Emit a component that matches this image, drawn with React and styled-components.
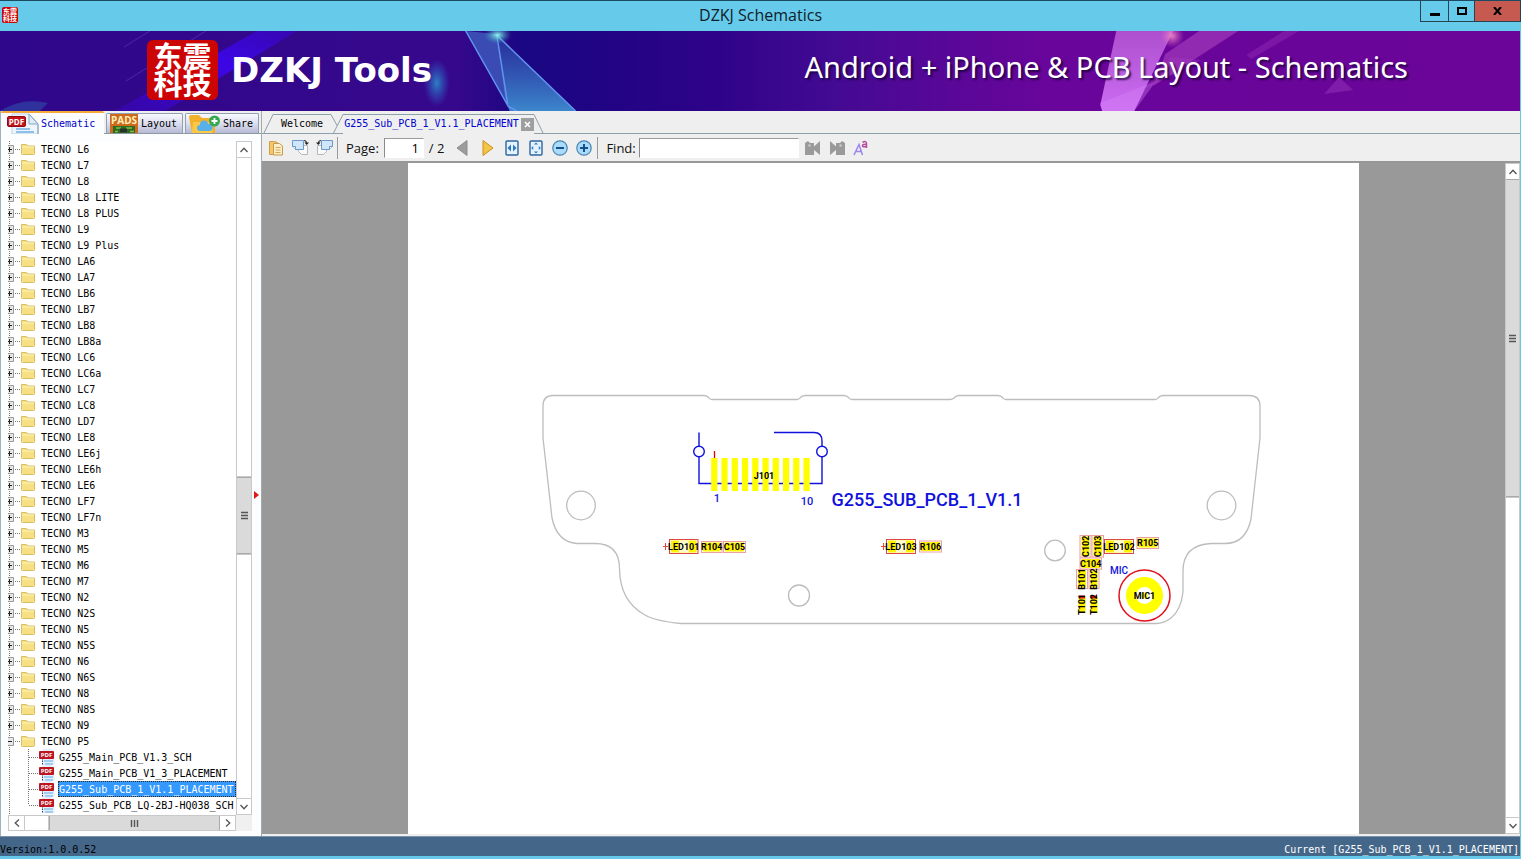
import React, { useState } from "react"
import styled, { createGlobalStyle } from "styled-components"

const GlobalStyle = createGlobalStyle`
  * {
    box-sizing: border-box;
  }
  body {
    margin: 0;
    background: #efefef;
    font-family: "Open Sans", sans-serif;
  }
  button {
    font: inherit;
    padding: 0;
    border: 0;
    background: none;
    color: inherit;
    cursor: pointer;
  }
`

const mono = `"DejaVu Sans Mono", "Liberation Mono", monospace`

const Window = styled.div`
  display: flex;
  flex-direction: column;
  height: 100vh;
  overflow: hidden;
  border-bottom: 3px solid #66c9e9;
`

const TitleBar = styled.header`
  display: flex;
  align-items: flex-start;
  justify-content: space-between;
  flex: 0 0 31px;
  border-top: 1px solid #1b4a63;
  background: #66cbea;
`

const TitleSide = styled.div`
  display: flex;
  flex: 1;
  justify-content: ${({ $end }) => ($end ? "flex-end" : "flex-start")};
  padding-left: 2px;
`

const Title = styled.h1`
  margin: 0;
  font-size: 16px;
  font-weight: 400;
  line-height: 29px;
  color: #10202a;
`

const Seal = styled.span`
  width: ${({ $small }) => ($small ? "16px" : "71px")};
  height: ${({ $small }) => ($small ? "16px" : "60px")};
  margin-top: ${({ $small }) => ($small ? "6px" : "0")};
  padding: ${({ $small }) => ($small ? "1px" : "2px 6px")};
  border-radius: ${({ $small }) => ($small ? "2px" : "6px")};
  background: #cc0404;
  color: #fff;
  font-family: "Noto Sans CJK SC", sans-serif;
  font-weight: 700;
  font-size: ${({ $small }) => ($small ? "7px" : "29px")};
  line-height: ${({ $small }) => ($small ? "7px" : "27px")};
  text-align: center;
`

const WindowButton = styled.button`
  display: grid;
  place-items: center;
  width: ${({ $wide }) => `${$wide || 27}px`};
  height: 21px;
  border: 1px solid #26434f;
  border-top: 0;
  margin-left: -1px;
  background: ${({ $close }) => ($close ? "#c65a50" : "transparent")};
`

const Banner = styled.section`
  display: grid;
  flex: 0 0 80px;
  overflow: hidden;
  border-right: 1px solid #66c9e9;
  background: #33078b;
  > * {
    grid-area: 1 / 1;
  }
`

const BannerArt = styled.svg`
  width: 100%;
  height: 80px;
`

const BannerText = styled.div`
  display: flex;
  align-items: center;
  justify-content: space-between;
  padding: 0 112px 2px 147px;
  z-index: 1;
  color: #fff;
`

const Brand = styled.div`
  display: flex;
  align-items: center;
  gap: 13px;
  font-family: "DejaVu Sans", sans-serif;
  font-weight: 700;
  font-size: 34px;
`

const Slogan = styled.p`
  margin: 0;
  padding-bottom: 6px;
  font-family: "Noto Sans", sans-serif;
  font-size: 29px;
  line-height: 36px;
  text-shadow: 2px 2px 2px rgba(20, 0, 50, 0.8);
`

const Body = styled.main`
  display: flex;
  flex: 1;
  min-height: 0;
  border-right: 1px solid #66c9e9;
`

const Sidebar = styled.aside`
  display: flex;
  flex-direction: column;
  flex: 0 0 262px;
  min-height: 0;
  border-left: 1px solid #9fb2c0;
  border-right: 1px solid #a5a9ad;
`

const SideTabs = styled.nav`
  display: flex;
  align-items: flex-end;
  flex: 0 0 23px;
  gap: 2px;
  border-bottom: 1px solid #8d9aa5;
`

const SideTab = styled.button`
  display: flex;
  align-items: center;
  gap: ${({ $active }) => ($active ? "2px" : "3px")};
  height: ${({ $active }) => ($active ? "23px" : "20px")};
  width: ${({ $width }) => `${$width}px`};
  padding-left: ${({ $active }) => ($active ? "6px" : "3px")};
  margin-bottom: ${({ $active }) => ($active ? "-1px" : "0")};
  border: 1px solid #8fa0b4;
  border-width: ${({ $active }) => ($active ? "2px 0 0" : "1px 1px 0")};
  border-top-color: ${({ $active }) => ($active ? "#f5a938" : "#8fa0b4")};
  border-radius: 2px 2px 0 0;
  background: ${({ $active }) =>
    $active ? "#fcfdff" : "linear-gradient(#fafaff, #dcdeee 50%, #b5b9d4)"};
  font: 10px/16px ${mono};
  color: ${({ $active }) => ($active ? "#0000c8" : "#000")};
  overflow: hidden;
`

const SidePanel = styled.div`
  display: flex;
  flex: 1;
  min-height: 0;
  padding: 7px 0 5px 7px;
  background: #fcfdff;
`

const TreeBox = styled.div`
  display: grid;
  grid-template: minmax(0, 1fr) 16px / minmax(0, 1fr) 16px;
  flex: 1;
  background: #fff;
`

const Corner = styled.div`
  background: #f0f0f0;
`

const Splitter = styled.div`
  display: flex;
  align-items: center;
  justify-content: center;
  flex: 0 0 9px;
  padding-top: 18px;
`

const Tree = styled.ul`
  margin: 0;
  padding: 0;
  list-style: none;
  overflow: hidden;
  font: 10px/16px ${mono};
  color: #000;
`

const TreeRow = styled.button`
  display: flex;
  align-items: center;
  height: 16px;
  width: 100%;
  white-space: nowrap;
  svg {
    flex: none;
  }
`

const TreeLabel = styled.span`
  flex: ${({ $file }) => ($file ? "1" : "none")};
  margin-left: ${({ $file }) => ($file ? "3px" : "5px")};
  height: 16px;
  padding-left: 1px;
  line-height: 18px;
  text-align: left;
  overflow: hidden;
  background: ${({ $selected }) => ($selected ? "#3399ff" : "transparent")};
  outline: ${({ $selected }) => ($selected ? "1px dotted #3d2a10" : "none")};
  outline-offset: -1px;
  color: ${({ $selected }) => ($selected ? "#fff" : "#000")};
`

const Scroll = styled.div`
  display: flex;
  flex-direction: ${({ $row }) => ($row ? "row" : "column")};
  flex: 0 0 ${({ $size }) => `${$size || 16}px`};
  min-width: 0;
  min-height: 0;
  border: 1px solid #c9c9c9;
  background: #fff;
`

const ScrollArrow = styled.button`
  display: grid;
  place-items: center;
  flex: 0 0 15px;
  min-width: 0;
  background: #fff;
`

const ScrollSpace = styled.div`
  flex: ${({ $grow }) => $grow} 0 0;
  border: solid #c9c9c9;
  border-width: ${({ $row }) => ($row ? "0 1px" : "1px 0")};
`

const ScrollThumb = styled.div`
  display: grid;
  place-items: center;
  flex: ${({ $grow }) => $grow} 0 0;
  border: solid #a9a9a9;
  border-width: ${({ $row }) => ($row ? "0 1px" : "1px 0")};
  background: #dadada;
`

const Content = styled.section`
  display: flex;
  flex-direction: column;
  flex: 1;
  min-width: 0;
`

const DocTabs = styled.nav`
  display: flex;
  align-items: flex-end;
  flex: 0 0 23px;
  padding-left: 1px;
  border-bottom: 1px solid #8d9fa8;
`

const DocTab = styled.div`
  display: flex;
  align-items: center;
  gap: 2px;
  height: 20px;
  padding: ${({ $active }) => ($active ? "0 0 0 1px" : "0 8px")};
  margin-bottom: -1px;
  border-top: 1px solid #8d9fa8;
  border-bottom: 1px solid ${({ $active }) => ($active ? "#efefef" : "#8d9fa8")};
  font: 10px/18px ${mono};
  color: ${({ $active }) => ($active ? "#0000d0" : "#000")};
`

const TabEdge = styled.svg`
  flex: none;
  height: 20px;
  margin-bottom: -1px;
  fill: none;
  stroke: #8d9fa8;
`

const CloseTab = styled.button`
  display: grid;
  place-items: center;
  width: 13px;
  height: 13px;
  background: #9f9f9f;
`

const Toolbar = styled.div`
  display: flex;
  align-items: center;
  flex: 0 0 29px;
  padding-left: 2px;
  border-bottom: 2px solid #989898;
  background: #efefef;
  font-size: 13px;
  color: #111;
`

const ToolButton = styled.button`
  display: grid;
  place-items: center;
  width: 24px;
  height: 24px;
`

const ToolGroup = styled.div`
  display: flex;
  align-items: center;
  gap: ${({ $gap }) => `${$gap || 0}px`};
  margin-left: ${({ $space }) => `${$space || 0}px`};
`

const Divider = styled.span`
  width: 1px;
  height: 22px;
  margin: 0 8px 0 1px;
  background: #9a9a9a;
`

const ToolInput = styled.input`
  width: ${({ $width }) => `${$width}px`};
  height: 20px;
  padding: 0 4px 0 2px;
  border: 1px solid #fff;
  border-top-color: #9a9a9a;
  border-left-color: #8a8a8a;
  background: #fff;
  font: 13px "Open Sans", sans-serif;
  text-align: ${({ $right }) => ($right ? "right" : "left")};
`

const Viewer = styled.div`
  display: flex;
  flex: 1;
  min-height: 0;
  padding-bottom: 2px;
`

const Canvas = styled.div`
  display: flex;
  justify-content: center;
  flex: 1;
  min-width: 0;
  background: #999;
`

const Sheet = styled.svg`
  width: 100%;
  max-width: 951px;
  height: 100%;
  background: #fff;
  font-family: Roboto, sans-serif;
  font-weight: 700;
  text-anchor: middle;
`

const StatusBar = styled.footer`
  display: flex;
  justify-content: space-between;
  align-items: flex-end;
  flex: 0 0 20px;
  padding-right: 1px;
  border-top: 1px solid #7d93a8;
  border-right: 1px solid #66c9e9;
  background: #446789;
  font: 10px/12px ${mono};
  color: #000;
`

const Current = styled.span`
  color: #fff;
`

const Arrow = ({ dir }) => {
  const turn = { up: 0, right: 90, down: 180, left: 270 }[dir]
  return (
    <svg width="10" height="10" viewBox="0 0 10 10" fill="none" stroke="#555" strokeWidth="1.3">
      <path d="M1.5 7 5 3.2 8.5 7" transform={`rotate(${turn} 5 5)`} />
    </svg>
  )
}

const ScrollBar = ({ row, size, before, thumb, after }) => (
  <Scroll $row={row} $size={size}>
    <ScrollArrow aria-label="Scroll back"><Arrow dir={row ? "left" : "up"} /></ScrollArrow>
    {before > 0 && <ScrollSpace $grow={before} $row={row} />}
    <ScrollThumb $grow={thumb} $row={row}>
      <svg width="9" height="9" viewBox="0 0 9 9" stroke="#555" strokeWidth="1.4">
        <path d="M1 1.5h7M1 4.5h7M1 7.5h7" transform={row ? "rotate(90 4.5 4.5)" : undefined} />
      </svg>
    </ScrollThumb>
    {after > 0 && <ScrollSpace $grow={after} $row={row} />}
    <ScrollArrow aria-label="Scroll forward"><Arrow dir={row ? "right" : "down"} /></ScrollArrow>
  </Scroll>
)

const PdfIcon = ({ large }) => (
  <svg width={large ? 32 : 16} height={large ? 21 : 16} viewBox={large ? "0 0 32 21" : "0 0 16 16"}>
    {large ? (
      <>
        <path d="M5 21V1h17l9 10v10z" fill="#eef5fc" stroke="#b9d3ea" />
        <path d="m22 1 9 10v10" fill="none" stroke="#7f97ab" />
        <path d="M22 1v10h9z" fill="#dcebf8" stroke="#8aa8c4" />
        <path d="M9 16h14M9 19h18" stroke="#8fc0ea" strokeWidth="2" />
        <rect x=".5" y="3.500" width="18" height="10" rx="1.500" fill="#c4141c" stroke="#8c0a10" />
        <text x="9.5" y="11.500" fontSize="8" fontFamily="Open Sans, sans-serif" fontWeight="700" fill="#fff" textAnchor="middle">PDF</text>
      </>
    ) : (
      <>
        <path d="M3.500 0h9l3 4v12h-12z" fill="#e3f0fb" />
        <path d="M3.500 9v7" stroke="#335" strokeDasharray="1.500 1" />
        <path d="M5 12h9M6 15h8" stroke="#8cc1ee" strokeWidth="1.600" />
        <rect x="0" y="2" width="15" height="8" rx="1" fill="#bd1420" />
        <text x="7.5" y="8.300" fontSize="6" fontFamily="Open Sans, sans-serif" fontWeight="700" fill="#fff" textAnchor="middle">PDF</text>
      </>
    )}
  </svg>
)

const PadsIcon = () => (
  <svg width="28" height="19" viewBox="0 0 28 19">
    <path d="M0 0h28v19H0z" fill="#cf6a1c" />
    <path d="M3 12h22v7H3z" fill="#2e6b22" />
    <path d="M5 17.500h3m2 0h7m3 0h4M6 14h5m5 0h6" stroke="#7dbb4a" strokeWidth="1.500" />
    <path d="M10 14.500h7v4h-7z" fill="#26312a" />
    <text x="14" y="10" fontSize="10" fontFamily="Open Sans, sans-serif" fontWeight="700" fill="#fff0bd" textAnchor="middle">PADS</text>
  </svg>
)

const ShareIcon = () => (
  <svg width="31" height="19" viewBox="0 0 31 19">
    <path d="M0 3q0-2 2-2h8l3 3h11q2 0 2 2v13H3z" fill="#f3b02a" />
    <path d="M4 8h21l-2 11H3z" fill="#fcc846" />
    <path d="M11 17a3 3 0 0 1 0-6 4 4 0 0 1 8-1 3.500 3.500 0 0 1 2 7z" fill="#58b0ea" />
    <circle cx="25.500" cy="7" r="5.500" fill="#36a852" />
    <path d="M22.500 7h6M25.500 4v6" stroke="#fff" strokeWidth="1.800" />
  </svg>
)

const FolderIcon = () => (
  <svg width="14" height="16" viewBox="0 0 14 16">
    <path d="M.5 12.500v-9h5l1.500 1.500h6.500v7.500q0 1-1 1h-11q-1 0-1-1z" fill="#f7e084" stroke="#d9bd62" />
    <path d="M1 6h12" stroke="#fff3b8" />
  </svg>
)

const RootLines = ({ open }) => (
  <svg width="13" height="16" viewBox="0 0 13 16">
    <path d="M1.500 0v16M7 8.500h6" stroke="#777" strokeDasharray="1 1" />
    <path d="M-2 4.500h7.500v8H-2z" fill="#e8e8ea" stroke="#999" />
    <path d={open ? "M0 8.500h4" : "M0 8.500h4M1.500 6v5"} stroke="#222" />
  </svg>
)

const LeafLines = ({ last }) => (
  <svg width="31" height="16" viewBox="0 0 31 16">
    <path d={`M1.500 0v16M20.500 0v${last ? 8 : 16}M21 8.500h10`} stroke="#777" strokeDasharray="1 1" />
  </svg>
)

const models = [
  "L6", "L7", "L8", "L8 LITE", "L8 PLUS", "L9", "L9 Plus", "LA6", "LA7", "LB6", "LB7", "LB8",
  "LB8a", "LC6", "LC6a", "LC7", "LC8", "LD7", "LE8", "LE6j", "LE6h", "LE6", "LF7", "LF7n",
  "M3", "M5", "M6", "M7", "N2", "N2S", "N5", "N5S", "N6", "N6S", "N8", "N8S", "N9", "P5",
]

const files = [
  "G255_Main_PCB_V1.3_SCH",
  "G255_Main_PCB_V1_3_PLACEMENT",
  "G255_Sub_PCB_1_V1.1_PLACEMENT",
  "G255_Sub_PCB_LQ-2BJ-HQ038_SCH",
]

const FileTree = () => {
  const [selected, setSelected] = useState(files[2])
  return (
    <Tree>
      {models.map((model) => (
        <li key={model}>
          <TreeRow>
            <RootLines open={model === "P5"} />
            <FolderIcon />
            <TreeLabel>TECNO {model}</TreeLabel>
          </TreeRow>
        </li>
      ))}
      {files.map((file, i) => (
        <li key={file}>
          <TreeRow onClick={() => setSelected(file)}>
            <LeafLines last={i === files.length - 1} />
            <PdfIcon />
            <TreeLabel $file $selected={file === selected}>{file}</TreeLabel>
          </TreeRow>
        </li>
      ))}
      <li>
        <TreeRow aria-label="Next folder">
          <RootLines />
          <FolderIcon />
        </TreeRow>
      </li>
    </Tree>
  )
}

const BannerShapes = () => (
  <BannerArt viewBox="0 0 1521 80" preserveAspectRatio="none" aria-hidden="true">
    <defs>
      <linearGradient id="base">
        <stop offset="0" stopColor="#2f078a" />
        <stop offset=".3" stopColor="#36088c" />
        <stop offset=".345" stopColor="#1a0782" />
        <stop offset=".4" stopColor="#210483" />
        <stop offset=".47" stopColor="#2e0389" />
        <stop offset=".55" stopColor="#430a92" />
        <stop offset=".6" stopColor="#520896" />
        <stop offset=".69" stopColor="#69059b" />
        <stop offset="1" stopColor="#6b0599" />
      </linearGradient>
      <linearGradient id="streak" x1="1" y1="0" x2="0" y2="1">
        <stop offset="0" stopColor="#3a06d6" stopOpacity=".5" />
        <stop offset=".4" stopColor="#3c06e6" />
        <stop offset="1" stopColor="#3c06d0" stopOpacity=".4" />
      </linearGradient>
      <linearGradient id="shard" x1="0" y1="0" x2="0" y2="1">
        <stop offset="0" stopColor="#2c3ca6" stopOpacity=".7" />
        <stop offset="1" stopColor="#3c86cc" />
      </linearGradient>
      <linearGradient id="pink" x1="0" y1="0" x2="0" y2="1">
        <stop offset="0" stopColor="#ad4fce" />
        <stop offset="1" stopColor="#cc6df2" />
      </linearGradient>
      <radialGradient id="blob">
        <stop offset="0" stopColor="#2b80c4" />
        <stop offset="1" stopColor="#2b60c4" stopOpacity="0" />
      </radialGradient>
      <radialGradient id="spark">
        <stop offset="0" stopColor="#8ff6f0" />
        <stop offset="1" stopColor="#2b8fb4" stopOpacity="0" />
      </radialGradient>
      <radialGradient id="flare">
        <stop offset="0" stopColor="#ff9cc8" stopOpacity=".8" />
        <stop offset="1" stopColor="#e060c0" stopOpacity="0" />
      </radialGradient>
    </defs>
    <path d="M0 0h1521v80H0z" fill="url(#base)" />
    <path d="M257 0h40L165 80h-50z" fill="url(#streak)" />
    <path d="m206 0-80 50M150 0l-26 16" stroke="#5a3bc4" strokeOpacity=".6" />
    <path d="M0 80q22-14 48-8l-8 8z" fill="#2f66b4" opacity=".45" />
    <ellipse cx="437" cy="52" rx="13" ry="24" fill="url(#blob)" />
    <path d="m466 0 31 3 11 73z" fill="#3a4cb4" />
    <path d="m497 4 79 76h-66l-4-10z" fill="url(#shard)" />
    <path d="m466 0 43 76M497 3l11 70M498 5l78 75M508 75l9 5" fill="none" stroke="#6293ef" strokeWidth="1.5" />
    <ellipse cx="498" cy="4" rx="14" ry="9" fill="url(#spark)" />
    <path d="M1117 0h57l-39 80h-32l-2-6z" fill="url(#pink)" />
    <path d="m1101 72 56-22-22 30h-32z" fill="#d886fa" opacity=".35" />
    <path d="M1200 0h39l-85 55 12-32z" fill="#b84fc6" opacity=".5" />
    <path d="m1172 26 30 3-58 30z" fill="#a53cc4" opacity=".4" />
    <path d="M1285 0h15l-48 28-5-4z" fill="#a33fc4" opacity=".3" />
    <path d="m1340 46 14 13-29 4z" fill="#a33fc4" opacity=".4" />
    <ellipse cx="1173" cy="5" rx="12" ry="12" fill="url(#flare)" />
  </BannerArt>
)

const parts = [
  { name: "LED101", x: 669.5, y: 539.5, w: 28.5, h: 14, led: true },
  { name: "R104", x: 701.5, y: 541.5, w: 20.5, h: 11 },
  { name: "C105", x: 723.5, y: 541.5, w: 22, h: 11 },
  { name: "LED103", x: 886.5, y: 539.5, w: 29, h: 14, led: true },
  { name: "R106", x: 919.5, y: 541, w: 22, h: 11 },
  { name: "C102", x: 1080, y: 535.5, w: 11, h: 21.5, turned: true },
  { name: "C103", x: 1092, y: 535.5, w: 11.5, h: 21.5, turned: true },
  { name: "LED102", x: 1104.5, y: 539.5, w: 29, h: 14, led: true },
  { name: "R105", x: 1137, y: 537.5, w: 21.5, h: 11 },
  { name: "C104", x: 1080, y: 558, w: 21.5, h: 11 },
  { name: "B101", x: 1076.5, y: 569.5, w: 11, h: 19, turned: true },
  { name: "B102", x: 1089, y: 569.5, w: 10, h: 19, turned: true },
  { name: "T101", x: 1077, y: 595, w: 10, h: 19, turned: true, bare: true },
  { name: "T102", x: 1089, y: 595, w: 10, h: 19, turned: true, bare: true },
]

const Part = ({ name, x, y, w, h, led, turned, bare }) => {
  const cx = x + w / 2
  const cy = y + h / 2
  return (
    <g>
      <rect x={x} y={y} width={w} height={h} fill={bare ? "none" : "#fff"} stroke={bare ? "none" : led ? "#e04848" : "#eba0a0"} />
      <rect x={x + 1.5} y={y + 1} width={w - 3} height={h - 2} fill="#fff200" />
      {led && <rect x={cx - 5} y={y + 1} width="10" height={h - 2} fill="#fffccf" />}
      {bare && <path d={`M${cx - 3} ${y + 2}h6`} stroke="#d01010" strokeWidth="3" />}
      <text x={cx} y={cy + 3.3} fontSize="9" fill="#000" transform={turned ? `rotate(-90 ${cx} ${cy})` : undefined}>
        {name}
      </text>
    </g>
  )
}

const outline = `
  M543 406Q543 395.500 553 395.500H704Q707 395.500 709 398Q710 399.500 712 399.500
  H797Q799 399.500 800 398Q802 395.500 805 395.500H844Q847 395.500 849 398Q850 399.500 852 399.500
  H950Q952 399.500 954 398Q956 395.500 959 395.500H998Q1001 395.500 1003 398Q1004 399.500 1006 399.500
  H1155Q1157 399.500 1158 398Q1160 395.500 1163 395.500H1249Q1260 395.500 1260 406V438
  L1251 519Q1246 543.500 1225 543.500H1211Q1183 545 1183 571V592
  Q1181 610 1171 618Q1164 623.500 1156 623.500H681Q655 621 645 615Q619.500 601 619.500 568
  Q619 543.500 595 543.500H577Q557 542 552 518L543 438Z
`

const Board = () => (
  <Sheet viewBox="408 163 951 671" role="img" aria-label="G255 sub board placement">
    <g fill="none" stroke="#bdbdbd" strokeWidth="1.3">
      <path d={outline} />
      <circle cx="581" cy="505.500" r="14.300" />
      <circle cx="1221.500" cy="505.500" r="14.300" />
      <circle cx="799" cy="595.500" r="10.500" />
      <circle cx="1055" cy="550.500" r="10.300" />
    </g>
    <path d="M699 432.500v51h123V441q0-8.500-8-8.500h-40" fill="none" stroke="#1111dd" strokeWidth="1.400" />
    <circle cx="699" cy="451.500" r="5.300" fill="#fff" stroke="#1111dd" strokeWidth="1.400" />
    <circle cx="822" cy="451.500" r="5.300" fill="#fff" stroke="#1111dd" strokeWidth="1.400" />
    <path d="M714.500 451v8" stroke="#e00000" strokeWidth="1.300" />
    {Array.from({ length: 10 }, (_, i) => (
      <rect key={i} x={711.2 + i * 10.25} y="458" width="6.200" height="33" fill="#ff0" />
    ))}
    <text x="764" y="478.500" fontSize="9">J101</text>
    <g fill="#1111dd" fontWeight="500">
      <text x="717" y="502" fontSize="11">1</text>
      <text x="807" y="505" fontSize="11">10</text>
      <text x="927" y="506" fontSize="18">G255_SUB_PCB_1_V1.1</text>
      <text x="1119" y="574" fontSize="10">MIC</text>
    </g>
    <path d="M663 546.500h5m-2.500-3.500v7M881 546.500h5m-2.500-3.500v7" stroke="#e04848" />
    {parts.map((part) => <Part key={part.name} {...part} />)}
    <circle cx="1144.500" cy="595.500" r="25.500" fill="#fff" stroke="#e0101c" strokeWidth="1.500" />
    <circle cx="1144.500" cy="595.500" r="13.500" fill="none" stroke="#ff0" strokeWidth="10" />
    <circle cx="1144.500" cy="595.500" r="3" fill="#ff0" />
    <text x="1144.500" y="599" fontSize="9">MIC1</text>
  </Sheet>
)

const PasteIcon = () => (
  <svg width="16" height="16" viewBox="0 0 16 16">
    <path d="M1.500 1.500h5l3 1v12h-8z" fill="#f5c766" stroke="#c9a050" />
    <path d="M5.500 3.500h6l3 2.500v9h-9z" fill="#fdeeca" stroke="#c79a4c" />
    <path d="M7.500 7.500h5M7.500 10h5M7.500 12.500h5" stroke="#dba552" />
  </svg>
)

const RotateIcon = ({ left }) => (
  <svg width="17" height="17" viewBox="0 0 17 17">
    <g transform={left ? "translate(17 0) scale(-1 1)" : undefined}>
      <path d="M6.500 6.500h9v9h-6l-3-3z" fill="#fafafa" stroke="#b3b8bc" />
      <path d="M.5 1.500h11v9h-8l-3-3z" fill="#cfe6fa" stroke="#6c9ac4" />
      <path d="M.5 7.500h3v3" fill="#fff" stroke="#6c9ac4" />
      <path d="M12 1.500q2.500 0 2.500 3" fill="none" stroke="#333" strokeWidth="1.200" />
      <path d="M12.500 3.500H17l-2.300 2.500z" fill="#222" />
    </g>
  </svg>
)

const PagerIcon = ({ next }) => (
  <svg width="12" height="16" viewBox="0 0 12 16">
    {next
      ? <path d="M1 .5 11 8 1 15.500z" fill="#f2c644" stroke="#c98f1c" />
      : <path d="M11 .5 1 8l10 7.500z" fill="#9c9c9c" stroke="#8e8e8e" />}
  </svg>
)

const FitIcon = ({ page }) => (
  <svg width="14" height="16" viewBox="0 0 14 16">
    <rect x="1" y="1" width="12" height="14" rx="1" fill="#e3f2fd" stroke="#2f659e" strokeWidth="1.400" />
    {page
      ? <path d="m7 2.500 2 2H5zM7 13.500l2-2H5zM2.200 8l2-2v4zM11.800 8l-2-2v4z" fill="#2d76bc" />
      : <path d="M2.500 8 6 4.500v7zM11.500 8 8 4.500v7z" fill="#2d76bc" />}
  </svg>
)

const ZoomIcon = ({ plus }) => (
  <svg width="16" height="16" viewBox="0 0 16 16">
    <circle cx="8" cy="8" r="7.200" fill="#a9dcfa" stroke="#4783b5" strokeWidth="1.200" />
    <path d={plus ? "M4 8h8M8 4v8" : "M4 8h8"} stroke="#174f8c" strokeWidth="2" />
  </svg>
)

const FindIcon = ({ next }) => (
  <svg width="16" height="16" viewBox="0 0 16 16">
    <g transform={next ? "translate(16 0) scale(-1 1)" : undefined} fill="#9a9a9a">
      <path d="M0 3l3-2 2 2h4v3.500l6-5.500v14L9 10v5H0z" />
      <path d="M3.500 4.500h2v2h-2z" fill="#d5d5d5" />
    </g>
  </svg>
)

const CaseIcon = () => (
  <svg width="16" height="16" viewBox="0 0 16 16" fill="none">
    <path d="M1 15 6 4.500 9.500 15M3 11.500h5.500" stroke="#9a86ee" strokeWidth="1.500" />
    <path d="M9.500 2.200q4-1.800 4 1.300V8M13.500 4.200q-4-.2-4 1.600t4 .5" stroke="#b84a9c" strokeWidth="1.500" />
  </svg>
)

const App = () => {
  const [page, setPage] = useState("1")
  const [query, setQuery] = useState("")

  return (
    <>
      <GlobalStyle />
      <Window>
        <TitleBar>
          <TitleSide>
            <Seal $small>东震科技</Seal>
          </TitleSide>
          <Title>DZKJ Schematics</Title>
          <TitleSide $end>
            <WindowButton $wide={29} aria-label="Minimize">
              <svg width="10" height="10"><path d="M0 7h10v3H0z" /></svg>
            </WindowButton>
            <WindowButton aria-label="Maximize">
              <svg width="10" height="8"><path d="M1 1h8v6H1z" fill="none" stroke="#000" strokeWidth="2" /></svg>
            </WindowButton>
            <WindowButton $wide={47} $close aria-label="Close">
              <svg width="9" height="8"><path d="m1 0 7 8M8 0 1 8" stroke="#000" strokeWidth="2" /></svg>
            </WindowButton>
          </TitleSide>
        </TitleBar>

        <Banner>
          <BannerShapes />
          <BannerText>
            <Brand>
              <Seal>东震科技</Seal>
              DZKJ Tools
            </Brand>
            <Slogan>Android + iPhone &amp; PCB Layout - Schematics</Slogan>
          </BannerText>
        </Banner>

        <Body>
          <Sidebar>
            <SideTabs>
              <SideTab $active $width={103}><PdfIcon large />Schematic</SideTab>
              <SideTab $width={77}><PadsIcon />Layout</SideTab>
              <SideTab $width={74}><ShareIcon />Share</SideTab>
            </SideTabs>
            <SidePanel>
              <TreeBox>
                <FileTree />
                <ScrollBar before={320} thumb={76} after={245} />
                <ScrollBar row before={23} thumb={172} after={0} />
                <Corner />
              </TreeBox>
              <Splitter>
                <svg width="5" height="8"><path d="M0 0l5 4-5 4z" fill="#e01818" /></svg>
              </Splitter>
            </SidePanel>
          </Sidebar>

          <Content>
            <DocTabs>
              <TabEdge width="10" viewBox="0 0 10 20"><path d="M.5 20 10 .5" /></TabEdge>
              <DocTab>Welcome</DocTab>
              <TabEdge width="12" viewBox="0 0 12 20"><path d="m0 .5 6 11M2 20 12 .5" /></TabEdge>
              <DocTab $active>
                G255_Sub_PCB_1_V1.1_PLACEMENT
                <CloseTab aria-label="Close tab">
                  <svg width="7" height="7"><path d="m1 1 5 5M6 1 1 6" stroke="#fff" strokeWidth="1.600" /></svg>
                </CloseTab>
              </DocTab>
              <TabEdge width="10" viewBox="0 0 10 20"><path d="M0 .5 9.500 20" /></TabEdge>
            </DocTabs>

            <Toolbar>
              <ToolButton aria-label="Copy"><PasteIcon /></ToolButton>
              <ToolButton aria-label="Rotate right"><RotateIcon /></ToolButton>
              <ToolButton aria-label="Rotate left"><RotateIcon left /></ToolButton>
              <Divider />
              <ToolGroup $gap={5}>
                <label htmlFor="page">Page:</label>
                <ToolInput id="page" $width={40} $right value={page} onChange={(e) => setPage(e.target.value)} />
                <span>/ 2</span>
              </ToolGroup>
              <ToolGroup $gap={2} $space={6}>
                <ToolButton aria-label="Previous page"><PagerIcon /></ToolButton>
                <ToolButton aria-label="Next page"><PagerIcon next /></ToolButton>
              </ToolGroup>
              <ToolButton aria-label="Fit width"><FitIcon /></ToolButton>
              <ToolButton aria-label="Fit page"><FitIcon page /></ToolButton>
              <ToolButton aria-label="Zoom out"><ZoomIcon /></ToolButton>
              <ToolButton aria-label="Zoom in"><ZoomIcon plus /></ToolButton>
              <Divider />
              <ToolGroup $gap={3}>
                <label htmlFor="find">Find:</label>
                <ToolInput id="find" $width={160} value={query} onChange={(e) => setQuery(e.target.value)} />
              </ToolGroup>
              <ToolGroup $space={2}>
                <ToolButton aria-label="Find previous"><FindIcon /></ToolButton>
                <ToolButton aria-label="Find next"><FindIcon next /></ToolButton>
                <ToolButton aria-label="Match case"><CaseIcon /></ToolButton>
              </ToolGroup>
            </Toolbar>

            <Viewer>
              <Canvas><Board /></Canvas>
              <ScrollBar size={15} before={0} thumb={320} after={323} />
            </Viewer>
          </Content>
        </Body>

        <StatusBar>
          <span>Version:1.0.0.52</span>
          <Current>Current [G255_Sub_PCB_1_V1.1_PLACEMENT]</Current>
        </StatusBar>
      </Window>
    </>
  )
}

export default App
